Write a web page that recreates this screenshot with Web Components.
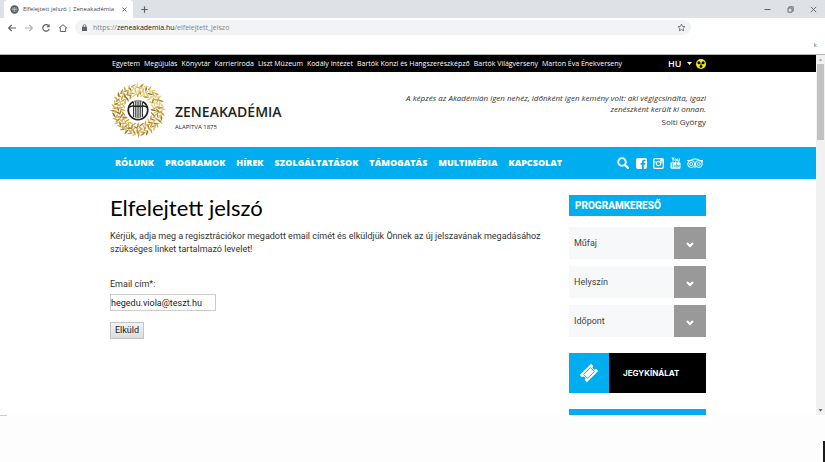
<!DOCTYPE html>
<html lang="hu">
<head>
<meta charset="utf-8">
<title>Elfelejtett jelszó | Zeneakadémia</title>
<style>
    body {
        background: #fdfdfd;
        color: #333;
        display: flex;
        flex-direction: column;
        font-family: "Roboto", sans-serif;
        font-size: 9px;
        line-height: 13px;
        margin: 0;
        min-height: 100vh;
    }
</style>
</head>
<body>
<browser-frame tab="Elfelejtett jelszó | Zeneakadémia" host="zeneakademia.hu" path="/elfelejtett_jelszo">
    <top-links></top-links>
    <site-header></site-header>
    <main-nav></main-nav>
    <page-columns>
        <password-form></password-form>
        <program-search slot="side"></program-search>
    </page-columns>
</browser-frame>
<desktop-strip></desktop-strip>

<script>
function define(name, getTemplate) {
    customElements.define(name, class extends HTMLElement {
        constructor() {
            super();
            const template = document.createElement("template");
            template.innerHTML = getTemplate(this);
            this.attachShadow({ mode: "open" }).appendChild(template.content.cloneNode(true));
        }
    });
}

const topLinks = ["Egyetem", "Megújulás", "Könyvtár", "Karrieriroda", "Liszt Múzeum", "Kodály Intézet",
    "Bartók Konzi és Hangszerészképző", "Bartók Világverseny", "Marton Éva Énekverseny"];

const navLinks = ["Rólunk", "Programok", "Hírek", "Szolgáltatások", "Támogatás", "Multimédia", "Kapcsolat"];

const filters = ["Műfaj", "Helyszín", "Időpont"];

define("browser-frame", (el) => `
    <style>
        :host {
            display: flex;
            flex: 1;
            flex-direction: column;
            min-height: 0;
        }

        svg {
            display: block;
            fill: none;
            stroke: #5f6368;
            stroke-width: 1.2;
        }

        button {
            background: none;
            border: 0;
            padding: 0;
        }

        .tabs {
            align-items: center;
            background: #dee1e6;
            display: flex;
            font: 6px/18px "Open Sans", sans-serif;
            height: 18px;
            padding-left: 4px;
        }

        .tab {
            align-items: center;
            background: #fff;
            border-radius: 4px 4px 0 0;
            color: #45484c;
            display: flex;
            height: 18px;
            padding: 0 6px;
        }

        .tab span {
            margin: 0 8px 0 4px;
        }

        .new-tab {
            margin-left: 8px;
        }

        .window {
            display: flex;
            gap: 16px;
            margin-left: auto;
            padding-right: 8px;
        }

        .toolbar {
            align-items: center;
            background: #fff;
            display: flex;
            gap: 7px;
            height: 19px;
            padding: 0 134px 0 7px;
        }

        .address {
            align-items: center;
            background: #f1f3f4;
            border-radius: 8px;
            color: #80868b;
            display: flex;
            flex: 1;
            font: 7px/15px "Open Sans", sans-serif;
            height: 15px;
            padding: 0 5px 0 7px;
        }

        .address p {
            flex: 1;
            margin: 0 0 0 6px;
        }

        .address b {
            color: #202124;
            font-weight: 400;
        }

        .bookmarks {
            background: #fff;
            border-bottom: 1px solid #b4b6b8;
            color: #5f6368;
            font: 6px/16px "Open Sans", sans-serif;
            height: 17px;
            padding-right: 8px;
            text-align: right;
        }

        .view {
            background: #fff;
            display: flex;
            flex: 1 1 0;
            overflow: hidden;
        }

        .page {
            flex: 1;
        }

        .scrollbar {
            align-items: center;
            background: #f1f1f1;
            display: flex;
            flex-direction: column;
            width: 9px;
        }

        .scrollbar svg {
            fill: #505050;
            stroke: none;
        }

        .thumb {
            background: #c1c1c1;
            height: 21%;
            margin-bottom: auto;
            width: 7px;
        }
    </style>
    <div class="tabs">
        <div class="tab">
            <svg width="9" height="9" viewBox="0 0 9 9"><circle cx="4.500" cy="4.500" r="4.200" fill="#55585c" stroke="none"/><path d="M1.500 4.200h6M3 2v5M4.500 2v5M6 2v5" stroke="#d5d8dc" stroke-width=".6"/></svg>
            <span>${el.getAttribute("tab")}</span>
            <button aria-label="Bezárás"><svg width="5" height="5" viewBox="0 0 5 5"><path d="M.5 .5l4 4M4.500 .5l-4 4" stroke-width=".9"/></svg></button>
        </div>
        <button class="new-tab" aria-label="Új lap"><svg width="7" height="7" viewBox="0 0 7 7"><path d="M3.500 .3v6.400M.3 3.500h6.400"/></svg></button>
        <div class="window">
            <button aria-label="Kis méret"><svg width="7" height="7" viewBox="0 0 7 7"><path d="M.5 3.500h6" stroke-width="1"/></svg></button>
            <button aria-label="Visszaállítás"><svg width="7" height="7" viewBox="0 0 7 7"><path d="M1 2h4v4.200H1zM2 1.800V.8h4.200V5H5.200" stroke-width=".9"/></svg></button>
            <button aria-label="Ablak bezárása"><svg width="7" height="7" viewBox="0 0 7 7"><path d="M.8 .8l5.400 5.400M6.200 .8L.8 6.200" stroke-width=".9"/></svg></button>
        </div>
    </div>
    <div class="toolbar">
        <button aria-label="Vissza"><svg width="10" height="10" viewBox="0 0 10 10"><path d="M9 5H1.800M4.800 1.800L1.600 5l3.200 3.200"/></svg></button>
        <button aria-label="Előre"><svg width="10" height="10" viewBox="0 0 10 10" style="opacity:.5"><path d="M1 5h7.200M5.200 1.800L8.400 5 5.200 8.200"/></svg></button>
        <button aria-label="Frissítés"><svg width="10" height="10" viewBox="0 0 10 10"><path d="M8 3.200A3.300 3.300 0 1 0 8.300 5.800"/><path d="M8.600 1v3.300H5.300z" fill="#5f6368" stroke="none"/></svg></button>
        <button aria-label="Kezdőlap"><svg width="10" height="10" viewBox="0 0 10 10"><path d="M1 5.200L5 1.700l4 3.500M2.300 4.500v4h5.400v-4" stroke-width="1"/></svg></button>
        <div class="address">
            <svg width="5" height="7" viewBox="0 0 5 7"><path d="M0 2.800h5V7H0z" fill="#5f6368" stroke="none"/><path d="M1.200 3V1.900a1.300 1.300 0 0 1 2.600 0V3" stroke-width=".8"/></svg>
            <p>https://<b>${el.getAttribute("host")}</b>${el.getAttribute("path")}</p>
            <button aria-label="Könyvjelző"><svg width="9" height="9" viewBox="0 0 10 10"><path d="M5 1.200l1.100 2.600 2.800.3-2.100 1.900.6 2.700L5 7.300 2.600 8.700l.6-2.700-2.100-1.900 2.800-.3z" stroke-width=".9"/></svg></button>
        </div>
    </div>
    <div class="bookmarks">k</div>
    <div class="view">
        <div class="page"><slot></slot></div>
        <div class="scrollbar">
            <svg width="9" height="9" viewBox="0 0 9 9"><path d="M2.500 5.800l2-2.300 2 2.300z" fill="#a3a3a3"/></svg>
            <div class="thumb"></div>
            <svg width="9" height="9" viewBox="0 0 9 9"><path d="M2.500 3.200l2 2.300 2-2.300z"/></svg>
        </div>
    </div>`);

define("top-links", () => `
    <style>
        :host {
            background: #000;
            display: block;
        }

        .row {
            align-items: center;
            box-sizing: border-box;
            display: flex;
            font: 7px/17px "Open Sans", sans-serif;
            height: 17px;
            margin: 0 auto;
            max-width: 596px;
            padding-left: 2px;
        }

        nav {
            display: flex;
            flex: 1;
            gap: 4px;
            white-space: nowrap;
        }

        a {
            color: #fff;
            text-decoration: none;
        }

        .language {
            align-items: center;
            display: grid;
            margin-right: 4px;
            width: 24px;
        }

        select {
            appearance: none;
            background: none;
            border: 0;
            color: #fff;
            font: 600 9px/17px "Open Sans", sans-serif;
            grid-area: 1 / 1;
            padding: 0;
        }

        .language svg {
            grid-area: 1 / 1;
            justify-self: end;
            pointer-events: none;
        }

        svg {
            display: block;
        }
    </style>
    <div class="row">
        <nav>${topLinks.map((link) => `<a href="#">${link}</a>`).join("")}</nav>
        <div class="language">
            <select aria-label="Nyelv"><option>HU</option><option>EN</option></select>
            <svg width="5" height="3" viewBox="0 0 5 3"><path d="M0 0h5L2.500 3z" fill="#fff"/></svg>
        </div>
        <a href="#" aria-label="Akadálymentes változat">
            <svg width="10" height="10" viewBox="0 0 10 10">
                <circle cx="5" cy="5" r="5" fill="#f2ea1c"/>
                <circle cx="2.900" cy="3.700" r="1.500"/><circle cx="7.100" cy="3.700" r="1.500"/><circle cx="5" cy="7.400" r="1.400"/><circle cx="5" cy="5" r=".7"/>
            </svg>
        </a>
    </div>`);

function getWreath() {
    const colors = ["#c9a03c", "#b08a2c", "#dcbc62", "#957424", "#d0aa4a"];
    let leaves = "";
    [[15, 24, 1], [17.5, 28, -1], [20, 32, 1], [22.5, 34, -1], [24.5, 36, 1]].forEach(([radius, count, side], ring) => {
        for (let i = 0; i < count; i++) {
            const angle = Math.round(i * 360 / count + ring * 7);
            const tilt = side * (i % 3 * 28 + 12);
            const light = Math.cos((angle - 30) * Math.PI / 180) > 0.5 ? 2 : 0;
            const color = light && i % 2 ? "#e6cd83" : colors[(i * 3 + ring) % 5];
            leaves += `<path transform="rotate(${angle}) translate(0 ${-radius}) rotate(${tilt})" d="M0 3Q-1.700 0 0-3.500Q1.700 0 0 3z" fill="${color}"/>`;
        }
    });
    return leaves;
}

define("site-header", () => `
    <style>
        :host {
            display: block;
        }

        .row {
            align-items: center;
            display: flex;
            height: 75px;
            justify-content: space-between;
            margin: 0 auto;
            max-width: 596px;
        }

        .logo {
            align-items: center;
            color: #222;
            display: flex;
            font: 600 14px/18px "Open Sans", sans-serif;
            gap: 9px;
            text-decoration: none;
        }

        .name {
            padding-top: 14px;
        }

        small {
            display: block;
            font: 6px/8px "Open Sans", sans-serif;
            margin-top: 2px;
        }

        blockquote {
            font: italic 8px/11px "Open Sans", sans-serif;
            margin: 0;
            max-width: 310px;
            text-align: right;
        }

        cite {
            display: block;
            font-style: normal;
            margin-top: 2px;
        }
    </style>
    <div class="row">
        <a class="logo" href="#">
            <svg width="56" height="56" viewBox="-28 -28 56 56">
                ${getWreath()}
                <circle r="12.500" fill="#fff"/>
                <g fill="none" stroke="#222">
                    <path d="M-5-8.300A9.700 9.700 0 1 0 5-8.300" stroke-width="1.700"/>
                    <path d="M-5-8.300A9.700 9.700 0 0 1 5-8.300" stroke-width=".5"/>
                    <path d="M-9-2.500C-6-5-5-3.800-3.500-3.800H3.500C5-3.800 6-5 9-2.500" stroke-width="1.600"/>
                    <path d="M-4.500-8V7M-2.700-9V7.500M-.9-9V8M.9-9V8M2.700-9V7.500M4.500-8V7" stroke-width=".9"/>
                </g>
            </svg>
            <span class="name">ZENEAKADÉMIA<small>ALAPÍTVA 1875</small></span>
        </a>
        <blockquote>
            A képzés az Akadémián igen nehéz, időnként igen kemény volt: aki végigcsinálta, igazi zenészként került ki onnan.
            <cite>Solti György</cite>
        </blockquote>
    </div>`);

define("main-nav", () => `
    <style>
        :host {
            background: #00aeef;
            display: block;
        }

        .row {
            align-items: center;
            box-sizing: border-box;
            display: flex;
            height: 32px;
            justify-content: space-between;
            margin: 0 auto;
            max-width: 596px;
            padding: 0 3px 0 5px;
        }

        nav,
        .social {
            align-items: center;
            display: flex;
            gap: 11px;
        }

        .social {
            gap: 6px;
        }

        nav a {
            color: #fff;
            font: 800 9px/32px "Open Sans", sans-serif;
            text-decoration: none;
            text-transform: uppercase;
        }

        svg {
            display: block;
            fill: #fff;
        }
    </style>
    <div class="row">
        <nav>${navLinks.map((link) => `<a href="#">${link}</a>`).join("")}</nav>
        <div class="social">
            <a href="#" aria-label="Keresés"><svg width="13" height="12" viewBox="0 0 13 12"><circle cx="5" cy="5" r="3.800" fill="none" stroke="#fff" stroke-width="1.800"/><path d="M7.900 7.900l3 3" stroke="#fff" stroke-width="2.200" stroke-linecap="round"/></svg></a>
            <a href="#" aria-label="Facebook"><svg width="11" height="11" viewBox="0 0 11 11"><path fill-rule="evenodd" d="M2 0h7a2 2 0 0 1 2 2v7a2 2 0 0 1-2 2H7.800V6.800h1.400l.2-1.700H7.800V4c0-.5.200-.8.800-.8h.9V1.700H8.100C6.700 1.700 6 2.500 6 3.800v1.300H4.600v1.700H6V11H2a2 2 0 0 1-2-2V2a2 2 0 0 1 2-2z"/></svg></a>
            <a href="#" aria-label="Instagram"><svg width="11" height="11" viewBox="0 0 11 11"><rect x=".7" y=".7" width="9.600" height="9.600" rx="1.300" fill="none" stroke="#fff" stroke-width="1.300"/><path d="M.7 4.100h2.700M7.600 4.100h2.700M7.500 1.500h1.800v1.600H7.500z" stroke="#fff" stroke-width=".8"/><circle cx="5.500" cy="5.500" r="2.200" fill="none" stroke="#fff" stroke-width="1.200"/></svg></a>
            <a href="#" aria-label="YouTube"><svg width="11" height="12" viewBox="0 0 11 12"><rect x=".5" y="5.300" width="10" height="6.400" rx="1.200"/><path d="M2 .2l1.100 2.600V4.600M4.200 .2L3.100 2.800M7.800 1.500v2.700h1.500V1.500" fill="none" stroke="#fff" stroke-width=".9"/><ellipse cx="5.700" cy="3" rx=".8" ry="1.300" fill="none" stroke="#fff" stroke-width=".8"/><path d="M1.500 6.600h2M2.500 6.600v4M4.200 7.700v2.400h1.100V7.700M6.500 6.200v4.100h1V8h-1M9.700 9.700H8.700V8h.9v1H8.700" fill="none" stroke="#00aeef" stroke-width=".6"/></svg></a>
            <a href="#" aria-label="TripAdvisor"><svg width="16" height="11" viewBox="0 0 16 11"><path d="M0 2.500h3Q8-.6 13 2.500h3L15 4.200" fill="none" stroke="#fff" stroke-width="1"/><g fill="none" stroke="#fff"><circle cx="4.200" cy="6" r="3.500" stroke-width="1"/><circle cx="11.800" cy="6" r="3.500" stroke-width="1"/><circle cx="4.200" cy="6" r="1.500" stroke-width=".9"/><circle cx="11.800" cy="6" r="1.500" stroke-width=".9"/></g><path d="M7 8.500h2l-1 2z"/></svg></a>
        </div>
    </div>`);

define("page-columns", () => `
    <style>
        :host {
            display: grid;
            gap: 24px;
            grid-template-columns: 1fr 137px;
            margin: 0 auto;
            max-width: 596px;
            padding-top: 16px;
        }
    </style>
    <div><slot></slot></div>
    <aside><slot name="side"></slot></aside>`);

define("password-form", () => `
    <style>
        :host {
            display: block;
        }

        h1 {
            color: #000;
            font: 400 22px/26px "Lato", sans-serif;
            margin: 0 0 9px;
        }

        p {
            margin: 0 0 22px;
        }

        form {
            align-items: flex-start;
            display: flex;
            flex-direction: column;
        }

        input,
        button {
            box-sizing: border-box;
            color: #222;
            font: inherit;
            height: 17px;
        }

        input {
            background: #fff;
            border: 1px solid #ccc;
            margin: 3px 0 11px;
            padding: 0;
            width: 106px;
        }

        button {
            background: linear-gradient(#f3f3f3, #dcdcdc);
            border: 1px solid #c3c3c3;
            padding: 0 4px;
        }
    </style>
    <h1>Elfelejtett jelszó</h1>
    <p>Kérjük, adja meg a regisztrációkor megadott email címét és elküldjük Önnek az új jelszavának megadásához szükséges linket tartalmazó levelet!</p>
    <form>
        <label for="email">Email cím*:</label>
        <input id="email" type="email" value="hegedu.viola@teszt.hu">
        <button type="button">Elküld</button>
    </form>`);

define("program-search", () => `
    <style>
        :host {
            display: block;
        }

        h2 {
            background: #00aeef;
            color: #fff;
            font: 800 10px/21px "Roboto", sans-serif;
            margin: 0 0 11px;
            padding-left: 6px;
        }

        .filters {
            display: grid;
            gap: 7px;
            margin-bottom: 16px;
        }

        .filter {
            align-items: center;
            display: grid;
        }

        select {
            appearance: none;
            background: linear-gradient(#999, #999) right / 32px 100% no-repeat #f7f8fa;
            border: 0;
            border-radius: 0;
            color: #444;
            font: inherit;
            grid-area: 1 / 1;
            height: 32px;
            padding: 0 37px 0 5px;
            width: 100%;
        }

        .filter svg {
            grid-area: 1 / 1;
            justify-self: end;
            margin: 3px 12px 0 0;
            pointer-events: none;
        }

        .tickets {
            align-items: center;
            background: #000;
            color: #fff;
            display: grid;
            font: 700 8px/40px "Inter", sans-serif;
            gap: 14px;
            grid-template-columns: 40px 1fr;
            margin-bottom: 16px;
            text-decoration: none;
        }

        .icon {
            background: #00aeef;
            display: grid;
            height: 40px;
            place-items: center;
        }

        .next {
            background: #00aeef;
            height: 21px;
        }
    </style>
    <h2>PROGRAMKERESŐ</h2>
    <div class="filters">${filters.map((name) => `
        <div class="filter">
            <select aria-label="${name}"><option>${name}</option></select>
            <svg width="8" height="6" viewBox="0 0 8 6"><path d="M1 1l3 3 3-3" fill="none" stroke="#fff" stroke-width="2"/></svg>
        </div>`).join("")}
    </div>
    <a class="tickets" href="#">
        <span class="icon">
            <svg width="20" height="20" viewBox="-10 -10 20 20">
                <g transform="rotate(-45)">
                    <path d="M-8-5H8V-2A2 2 0 0 0 8 2V5H-8V2A2 2 0 0 0-8-2z" fill="#fff"/>
                    <path d="M-4.800-2.800H4.800V2.800H-4.800z" fill="none" stroke="#00aeef" stroke-width=".9"/>
                </g>
            </svg>
        </span>
        JEGYKÍNÁLAT
    </a>
    <div class="next"></div>`);

define("desktop-strip", () => `
    <style>
        :host {
            align-items: flex-end;
            display: flex;
            height: 47px;
            justify-content: space-between;
        }

        .edge {
            align-self: flex-start;
            background: #ccc;
            height: 1px;
            width: 7px;
        }

        .block {
            background: #1a1a1a;
            height: 21px;
            width: 2px;
        }
    </style>
    <div class="edge"></div>
    <div class="block"></div>`);
</script>
</body>
</html>
